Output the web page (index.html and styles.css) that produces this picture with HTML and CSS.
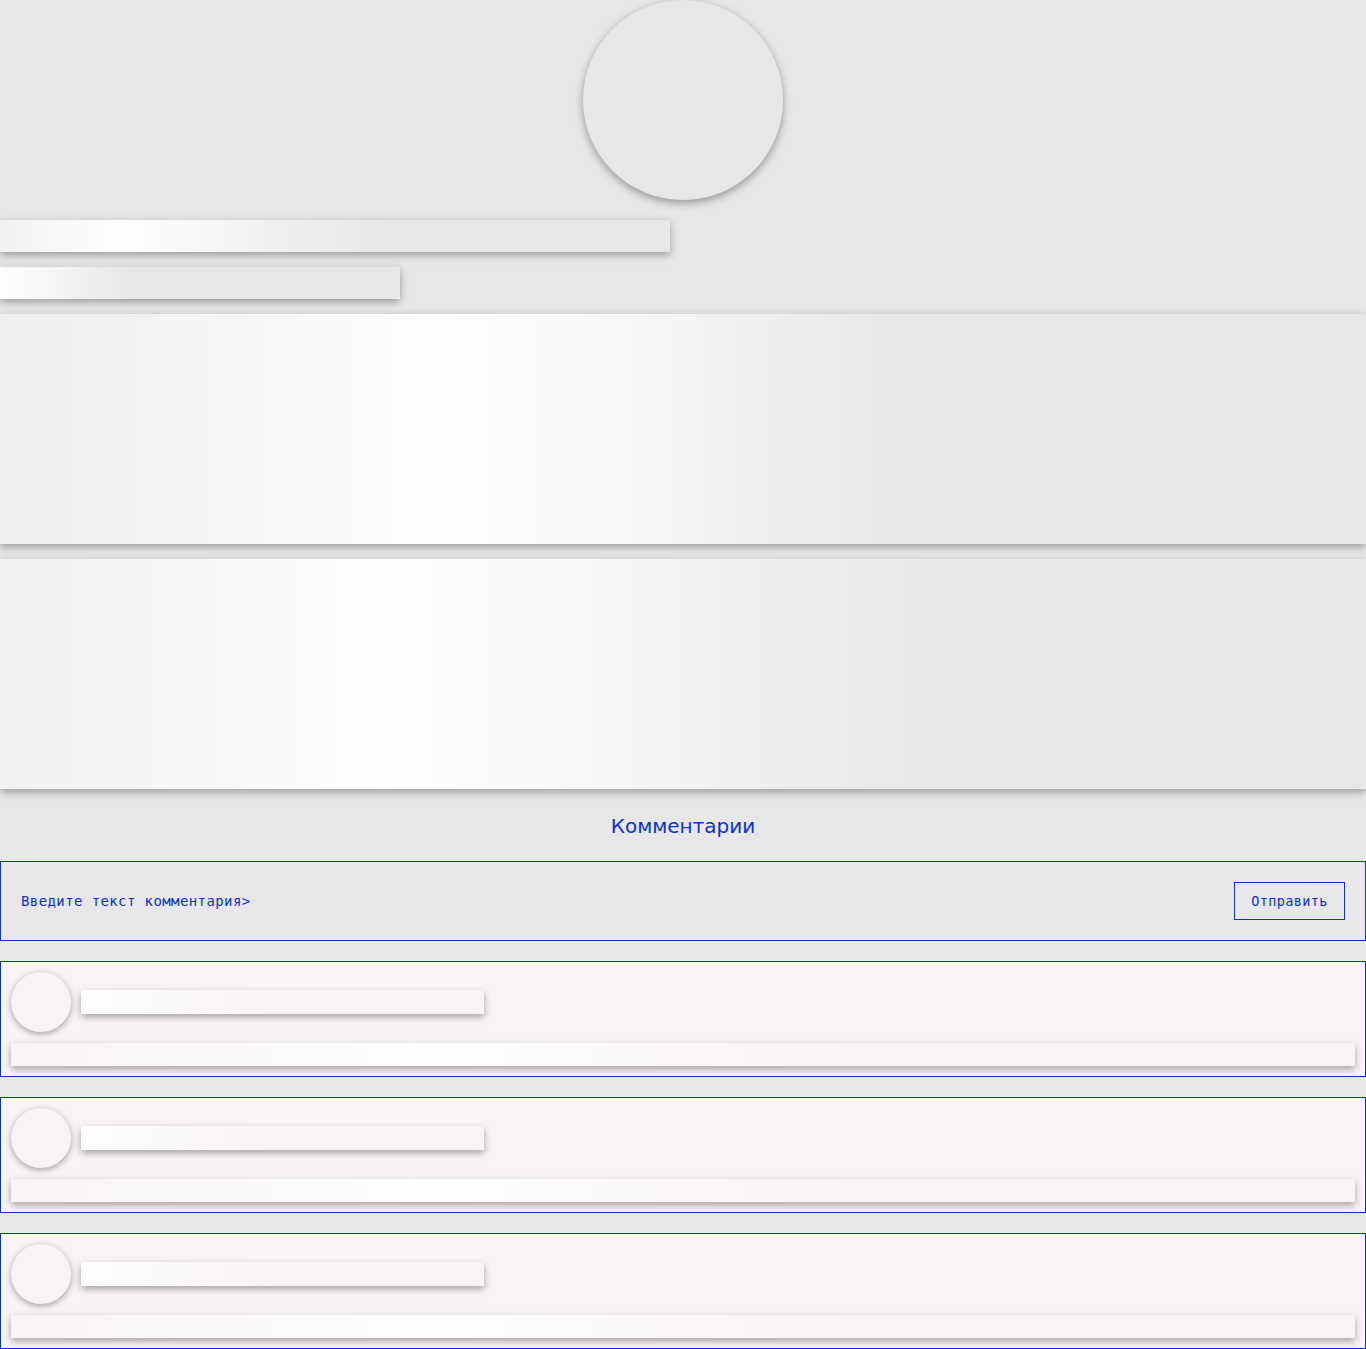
FILE: index.html
```html
<!DOCTYPE html>
<html lang="ru">
<head>
<meta charset="utf-8">
<title>Загрузка</title>
<link rel="stylesheet" href="styles.css">
</head>
<body>
<main class="page">
  <div class="avatar"></div>
  <div class="sk sk-title"></div>
  <div class="sk sk-sub"></div>
  <div class="sk sk-block sk-block-1"></div>
  <div class="sk sk-block sk-block-2"></div>

  <h2 class="comments-title">Комментарии</h2>

  <form class="comment-form">
    <span class="comment-input">Введите текст комментария&gt;</span>
    <button type="button" class="send-btn">Отправить</button>
  </form>

  <section class="comments">
    <article class="comment">
      <div class="comment-head">
        <div class="c-avatar"></div>
        <div class="c-name"></div>
      </div>
      <div class="c-line"></div>
    </article>
    <article class="comment">
      <div class="comment-head">
        <div class="c-avatar"></div>
        <div class="c-name"></div>
      </div>
      <div class="c-line"></div>
    </article>
    <article class="comment">
      <div class="comment-head">
        <div class="c-avatar"></div>
        <div class="c-name"></div>
      </div>
      <div class="c-line"></div>
    </article>
  </section>
</main>
</body>
</html>
```

FILE: styles.css
```css
* { box-sizing: border-box; }

html, body {
  margin: 0;
  padding: 0;
  background: #e7e7ea;
  font-family: "DejaVu Sans", "Noto Sans", sans-serif;
}

.page {
  display: flex;
  flex-direction: column;
}

.avatar {
  width: 200px;
  height: 200px;
  border-radius: 50%;
  background: #e7e7ea;
  margin: 0 auto;
  box-shadow: 0 3px 8px rgba(0, 0, 0, 0.36);
}

.sk {
  box-shadow: 0 3px 8px rgba(0, 0, 0, 0.34);
}

.sk-title {
  width: 670px;
  height: 32px;
  margin-top: 20px;
  background: linear-gradient(90deg, #f1f1f2 0%, #ffffff 18%, #f2f2f3 38%, #e7e7ea 57%, #e7e7ea 100%);
}

.sk-sub {
  width: 400px;
  height: 32px;
  margin-top: 15px;
  background: linear-gradient(90deg, #ffffff 0%, #f2f2f3 18%, #e7e7ea 33%, #e7e7ea 100%);
}

.sk-block {
  width: 100%;
  height: 230px;
  margin-top: 15px;
}

.sk-block-1 {
  background: linear-gradient(90deg, #efeff0 0%, #f6f6f6 18%, #ffffff 32%, #f6f6f7 48%, #ececee 60%, #e7e7ea 66%, #e7e7ea 100%);
}

.sk-block-2 {
  background: linear-gradient(90deg, #f1f1f2 0%, #f6f6f6 14%, #ffffff 28%, #f6f6f7 45%, #ececee 60%, #e7e7ea 70%, #e7e7ea 100%);
}

.comments-title {
  margin: 25px 0 23px;
  text-align: center;
  font-size: 20px;
  line-height: 24px;
  font-weight: normal;
  color: #0a32c8;
}

.comment-form {
  height: 80px;
  margin: 0;
  padding: 0 20px;
  border: 1px solid #0a32c8;
  display: flex;
  align-items: center;
  justify-content: space-between;
}

.comment-input,
.send-btn {
  font-family: "DejaVu Sans Mono", "Liberation Mono", monospace;
  font-size: 14px;
  letter-spacing: 0.4px;
  color: #0a32c8;
}

.send-btn {
  width: 111px;
  height: 38px;
  padding: 0;
  background: transparent;
  border: 1px solid #0a32c8;
  border-radius: 0;
  font-size: 13.5px;
}

.comments {
  display: flex;
  flex-direction: column;
  gap: 20px;
  margin-top: 20px;
}

.comment {
  height: 116px;
  padding: 10px;
  border: 1px solid #0a32c8;
  background: #f8f3f4;
  display: flex;
  flex-direction: column;
  gap: 11px;
}

.comment-head {
  display: flex;
  align-items: center;
  gap: 10px;
}

.c-avatar {
  width: 60px;
  height: 60px;
  border-radius: 50%;
  background: #f8f3f4;
  box-shadow: 0 2px 6px rgba(0, 0, 0, 0.34);
}

.c-name {
  width: 403px;
  height: 24px;
  background: linear-gradient(90deg, #ffffff 0%, #fbf8f9 25%, #f8f3f4 50%, #f8f3f4 100%);
  box-shadow: 0 3px 7px rgba(0, 0, 0, 0.34);
}

.c-line {
  width: 100%;
  height: 24px;
  background: linear-gradient(90deg, #f8f4f5 0%, #fbf9fa 15%, #ffffff 32%, #fbf8f9 48%, #f8f3f4 64%, #f8f3f4 100%);
  box-shadow: 0 3px 7px rgba(0, 0, 0, 0.34);
}
```
